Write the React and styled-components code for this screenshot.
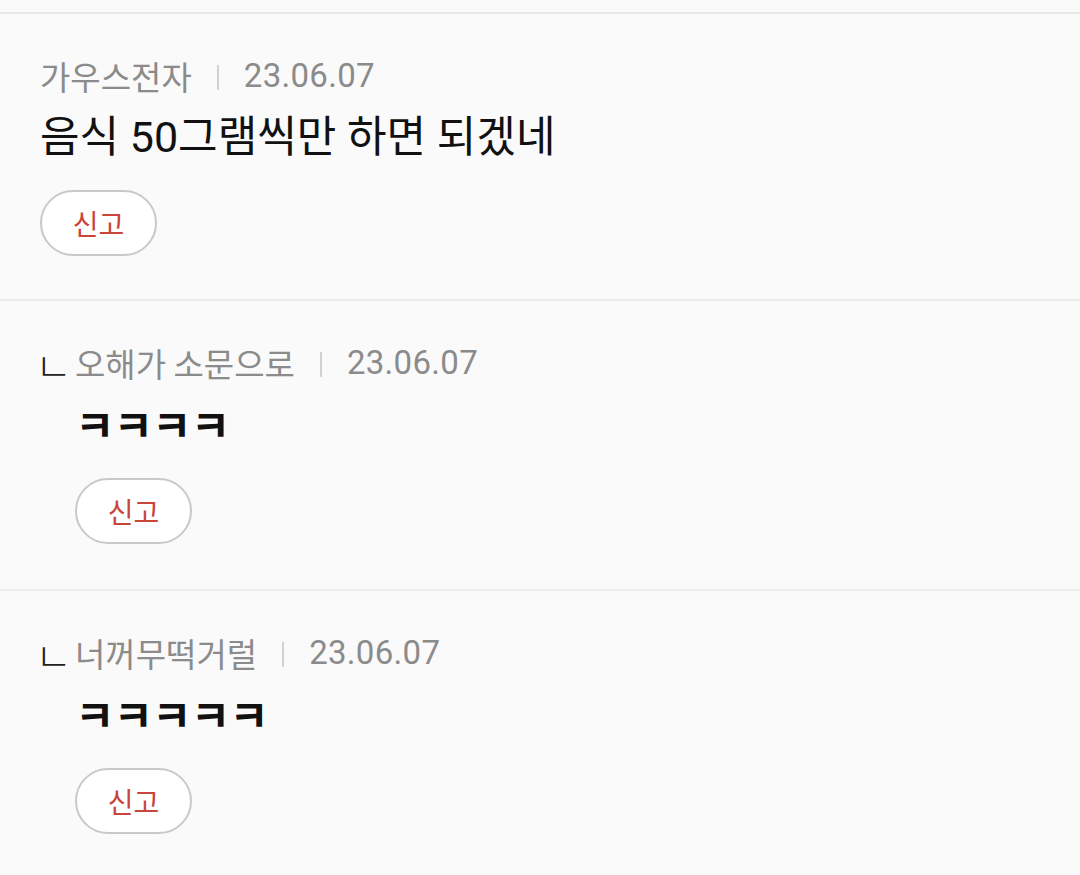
import React from "react";
import styled, { createGlobalStyle } from "styled-components";

const Global = createGlobalStyle`
  html, body {
    margin: 0;
    padding: 0;
    background: #fafafa;
  }
  body {
    font-family: Roboto, "Noto Sans CJK KR", sans-serif;
    -webkit-font-smoothing: antialiased;
  }
`;

const Page = styled.div`
  width: 1080px;
  min-height: 875px;
  background: #fafafa;
  overflow: hidden;
`;

const TopEdge = styled.div`
  height: 12px;
  border-bottom: 2px solid #e8e8e8;
`;

const Comment = styled.section`
  display: flex;
  align-items: flex-start;
  padding: ${(p) => (p.$reply ? "40px 40px 45px 37px" : "40px 40px 43px 40px")};
  border-bottom: 2px solid #ececec;
`;

const ReplyMark = styled.span`
  flex: 0 0 38px;
  height: 44px;
  display: flex;
  align-items: center;
  font-family: "Noto Sans CJK KR", sans-serif;
  font-size: 40px;
  font-weight: 300;
  line-height: 1;
  color: #222;
  padding-top: 2px;
  margin-left: -2px;
  margin-right: 2px;
  box-sizing: border-box;
`;

const Body = styled.div`
  display: flex;
  flex-direction: column;
  align-items: flex-start;
  min-width: 0;
`;

const Meta = styled.div`
  display: flex;
  align-items: center;
  height: 44px;
  gap: 25px;
  color: #8b8b8b;
`;

const Author = styled.span`
  font-family: "Noto Sans CJK KR", sans-serif;
  font-size: 33px;
  line-height: 44px;
`;

const Bar = styled.span`
  width: 2px;
  height: 25px;
  background: #d2d2d2;
  margin-top: 2px;
`;

const DateText = styled.span`
  font-family: Roboto, sans-serif;
  font-size: 33px;
  line-height: 44px;
  letter-spacing: 0.3px;
`;

const Text = styled.p`
  margin: ${(p) => (p.$reply ? "18px 0 0 0" : "15px 0 0 0")};
  font-family: Roboto, "Noto Sans CJK KR", sans-serif;
  font-size: ${(p) => (p.$bold ? "43px" : "43px")};
  line-height: 48px;
  font-weight: ${(p) => (p.$bold ? 700 : 400)};
  letter-spacing: ${(p) => (p.$bold ? "-1px" : "0")};
  color: #111;
`;

const ReportButton = styled.button`
  margin-top: ${(p) => (p.$reply ? "27px" : "29px")};
  width: 117px;
  height: 66px;
  border: 2px solid #c9c9c9;
  border-radius: 33px;
  background: #ffffff;
  color: #c8453a;
  font-family: "Noto Sans CJK KR", sans-serif;
  font-size: 28px;
  line-height: 1;
  padding: 0;
  display: flex;
  align-items: center;
  justify-content: center;
  cursor: pointer;
`;

const comments = [
  { author: "가우스전자", date: "23.06.07", text: "음식 50그램씩만 하면 되겠네", reply: false },
  { author: "오해가 소문으로", date: "23.06.07", text: "ㅋㅋㅋㅋ", reply: true },
  { author: "너꺼무떡거럴", date: "23.06.07", text: "ㅋㅋㅋㅋㅋ", reply: true },
];

export default function App() {
  return (
    <Page>
      <Global />
      <TopEdge />
      {comments.map((c, i) => (
        <Comment key={i} $reply={c.reply}>
          {c.reply && <ReplyMark>ㄴ</ReplyMark>}
          <Body>
            <Meta>
              <Author>{c.author}</Author>
              <Bar />
              <DateText>{c.date}</DateText>
            </Meta>
            <Text $reply={c.reply} $bold={c.reply}>
              {c.text}
            </Text>
            <ReportButton $reply={c.reply}>신고</ReportButton>
          </Body>
        </Comment>
      ))}
    </Page>
  );
}
